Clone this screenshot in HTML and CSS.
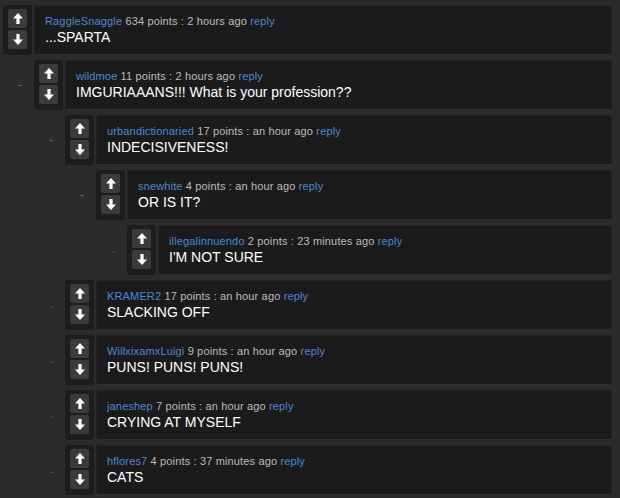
FILE: index.html
```html
<!DOCTYPE html>
<html lang="en">
<head>
    <meta charset="UTF-8">
    <title>Comments</title>
    <link rel="stylesheet" href="styles.css">
</head>
<body>
    <div class="thread">
        <div class="comment">
            <div class="row">
                <div class="vote">
                    <span class="btn"><svg width="10" height="11" viewBox="0 0 10 11"><path d="M5 0 L10 5.5 H6.6 V11 H3.4 V5.5 H0 Z" fill="#fff"/></svg></span>
                    <span class="btn"><svg width="10" height="11" viewBox="0 0 10 11"><path d="M5 11 L10 5.5 H6.6 V0 H3.4 V5.5 H0 Z" fill="#fff"/></svg></span>
                </div>
                <div class="body">
                    <div class="meta"><a class="user">RaggleSnaggle</a> 634 points : 2 hours ago <a class="reply">reply</a></div>
                    <div class="text">...SPARTA</div>
                </div>
            </div>
            <div class="replies">
                <div class="comment">
                    <div class="row">
                        <span class="toggle">-</span>
                        <div class="vote">
                            <span class="btn"><svg width="10" height="11" viewBox="0 0 10 11"><path d="M5 0 L10 5.5 H6.6 V11 H3.4 V5.5 H0 Z" fill="#fff"/></svg></span>
                            <span class="btn"><svg width="10" height="11" viewBox="0 0 10 11"><path d="M5 11 L10 5.5 H6.6 V0 H3.4 V5.5 H0 Z" fill="#fff"/></svg></span>
                        </div>
                        <div class="body">
                            <div class="meta"><a class="user">wildmoe</a> 11 points : 2 hours ago <a class="reply">reply</a></div>
                            <div class="text">IMGURIAAANS!!! What is your profession??</div>
                        </div>
                    </div>
                    <div class="replies">
                        <div class="comment">
                            <div class="row">
                                <span class="toggle">-</span>
                                <div class="vote">
                                    <span class="btn"><svg width="10" height="11" viewBox="0 0 10 11"><path d="M5 0 L10 5.5 H6.6 V11 H3.4 V5.5 H0 Z" fill="#fff"/></svg></span>
                                    <span class="btn"><svg width="10" height="11" viewBox="0 0 10 11"><path d="M5 11 L10 5.5 H6.6 V0 H3.4 V5.5 H0 Z" fill="#fff"/></svg></span>
                                </div>
                                <div class="body">
                                    <div class="meta"><a class="user">urbandictionaried</a> 17 points : an hour ago <a class="reply">reply</a></div>
                                    <div class="text">INDECISIVENESS!</div>
                                </div>
                            </div>
                            <div class="replies">
                                <div class="comment">
                                    <div class="row">
                                        <span class="toggle">-</span>
                                        <div class="vote">
                                            <span class="btn"><svg width="10" height="11" viewBox="0 0 10 11"><path d="M5 0 L10 5.5 H6.6 V11 H3.4 V5.5 H0 Z" fill="#fff"/></svg></span>
                                            <span class="btn"><svg width="10" height="11" viewBox="0 0 10 11"><path d="M5 11 L10 5.5 H6.6 V0 H3.4 V5.5 H0 Z" fill="#fff"/></svg></span>
                                        </div>
                                        <div class="body">
                                            <div class="meta"><a class="user">snewhite</a> 4 points : an hour ago <a class="reply">reply</a></div>
                                            <div class="text">OR IS IT?</div>
                                        </div>
                                    </div>
                                    <div class="replies">
                                        <div class="comment">
                                            <div class="row">
                                                <span class="toggle">.</span>
                                                <div class="vote">
                                                    <span class="btn"><svg width="10" height="11" viewBox="0 0 10 11"><path d="M5 0 L10 5.5 H6.6 V11 H3.4 V5.5 H0 Z" fill="#fff"/></svg></span>
                                                    <span class="btn"><svg width="10" height="11" viewBox="0 0 10 11"><path d="M5 11 L10 5.5 H6.6 V0 H3.4 V5.5 H0 Z" fill="#fff"/></svg></span>
                                                </div>
                                                <div class="body">
                                                    <div class="meta"><a class="user">illegalinnuendo</a> 2 points : 23 minutes ago <a class="reply">reply</a></div>
                                                    <div class="text">I'M NOT SURE</div>
                                                </div>
                                            </div>
                                        </div>
                                    </div>
                                </div>
                            </div>
                        </div>
                        <div class="comment">
                            <div class="row">
                                <span class="toggle">.</span>
                                <div class="vote">
                                    <span class="btn"><svg width="10" height="11" viewBox="0 0 10 11"><path d="M5 0 L10 5.5 H6.6 V11 H3.4 V5.5 H0 Z" fill="#fff"/></svg></span>
                                    <span class="btn"><svg width="10" height="11" viewBox="0 0 10 11"><path d="M5 11 L10 5.5 H6.6 V0 H3.4 V5.5 H0 Z" fill="#fff"/></svg></span>
                                </div>
                                <div class="body">
                                    <div class="meta"><a class="user">KRAMER2</a> 17 points : an hour ago <a class="reply">reply</a></div>
                                    <div class="text">SLACKING OFF</div>
                                </div>
                            </div>
                        </div>
                        <div class="comment">
                            <div class="row">
                                <span class="toggle">.</span>
                                <div class="vote">
                                    <span class="btn"><svg width="10" height="11" viewBox="0 0 10 11"><path d="M5 0 L10 5.5 H6.6 V11 H3.4 V5.5 H0 Z" fill="#fff"/></svg></span>
                                    <span class="btn"><svg width="10" height="11" viewBox="0 0 10 11"><path d="M5 11 L10 5.5 H6.6 V0 H3.4 V5.5 H0 Z" fill="#fff"/></svg></span>
                                </div>
                                <div class="body">
                                    <div class="meta"><a class="user">WillxixamxLuigi</a> 9 points : an hour ago <a class="reply">reply</a></div>
                                    <div class="text">PUNS! PUNS! PUNS!</div>
                                </div>
                            </div>
                        </div>
                        <div class="comment">
                            <div class="row">
                                <span class="toggle">.</span>
                                <div class="vote">
                                    <span class="btn"><svg width="10" height="11" viewBox="0 0 10 11"><path d="M5 0 L10 5.5 H6.6 V11 H3.4 V5.5 H0 Z" fill="#fff"/></svg></span>
                                    <span class="btn"><svg width="10" height="11" viewBox="0 0 10 11"><path d="M5 11 L10 5.5 H6.6 V0 H3.4 V5.5 H0 Z" fill="#fff"/></svg></span>
                                </div>
                                <div class="body">
                                    <div class="meta"><a class="user">janeshep</a> 7 points : an hour ago <a class="reply">reply</a></div>
                                    <div class="text">CRYING AT MYSELF</div>
                                </div>
                            </div>
                        </div>
                        <div class="comment">
                            <div class="row">
                                <span class="toggle">.</span>
                                <div class="vote">
                                    <span class="btn"><svg width="10" height="11" viewBox="0 0 10 11"><path d="M5 0 L10 5.5 H6.6 V11 H3.4 V5.5 H0 Z" fill="#fff"/></svg></span>
                                    <span class="btn"><svg width="10" height="11" viewBox="0 0 10 11"><path d="M5 11 L10 5.5 H6.6 V0 H3.4 V5.5 H0 Z" fill="#fff"/></svg></span>
                                </div>
                                <div class="body">
                                    <div class="meta"><a class="user">hflores7</a> 4 points : 37 minutes ago <a class="reply">reply</a></div>
                                    <div class="text">CATS</div>
                                </div>
                            </div>
                        </div>
                    </div>
                </div>
            </div>
        </div>
    </div>
</body>
</html>
```

FILE: styles.css
```css
body {
    margin: 0;
    padding: 5px 8px 0 3px;
    background-color: #2b2b2b;
    font-family: "Liberation Sans", Arial, sans-serif;
}
.row {
    display: flex;
    height: 50px;
    margin-bottom: 5px;
}
.replies .replies {
    margin-left: 31px;
}
.toggle {
    width: 31px;
    flex-shrink: 0;
    box-sizing: border-box;
    padding-right: 12px;
    text-align: right;
    line-height: 48px;
    font-size: 11px;
    color: #777;
}
.vote {
    width: 29px;
    flex-shrink: 0;
    box-sizing: border-box;
    padding: 4px 5px;
    background-color: #1d1d1d;
    border-radius: 3px;
    display: flex;
    flex-direction: column;
    gap: 2px;
}
.btn {
    width: 19px;
    height: 19px;
    background-color: #3b3b3b;
    border-radius: 2px;
    display: flex;
    align-items: center;
    justify-content: center;
}
.body {
    flex: 1;
    margin-left: 2px;
    padding: 8px 10px 0;
    background-color: #1b1b1b;
    border: 1px solid #222;
    border-bottom-color: #2f2f2f;
    border-radius: 3px;
}
.meta {
    font-size: 11px;
    line-height: 14px;
    letter-spacing: 0.15px;
    color: #bbb;
}
.user, .reply {
    color: #4f86d4;
}
.text {
    font-size: 14px;
    line-height: 18px;
    color: #fff;
}
```
